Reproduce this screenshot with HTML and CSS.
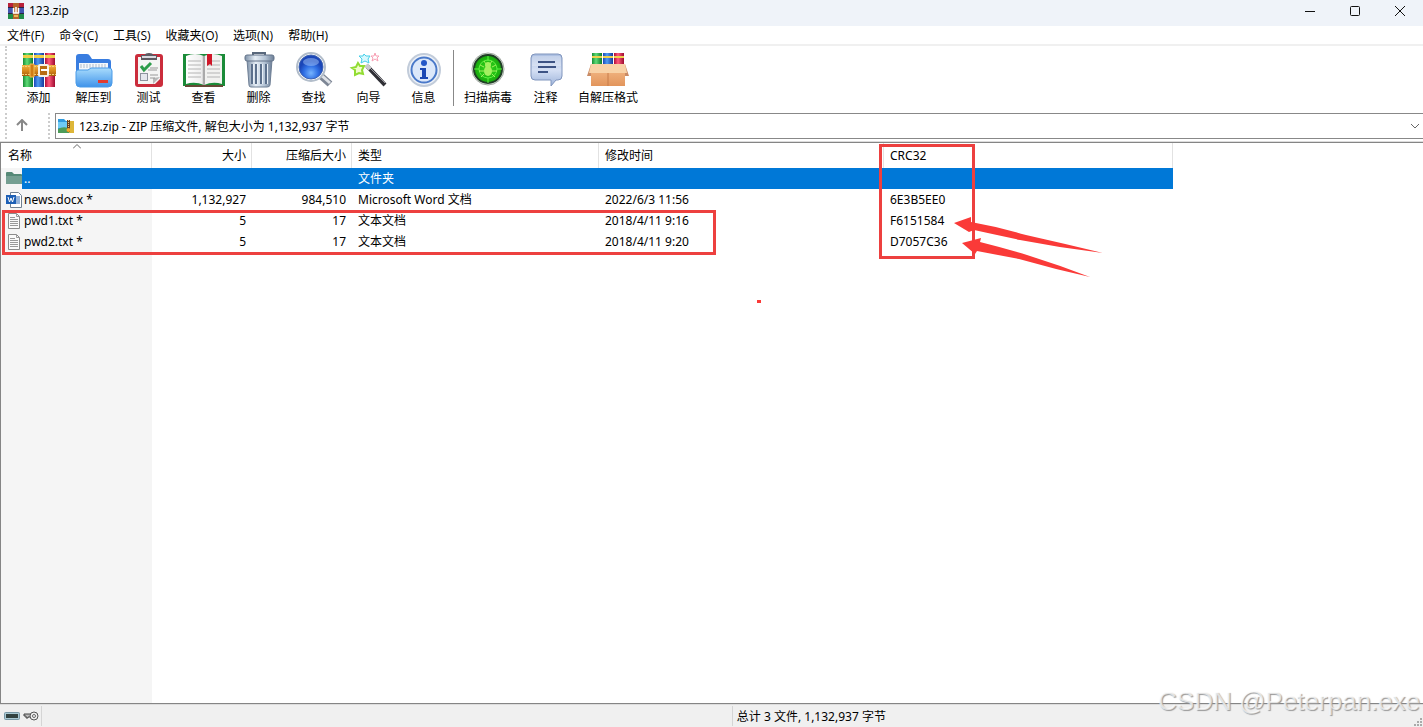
FILE: index.html
```html
<!DOCTYPE html>
<html lang="zh-CN">
<head>
<meta charset="utf-8">
<title>123.zip</title>
<link rel="stylesheet" href="styles.css">
</head>
<body>
<svg width="0" height="0" class="defs" aria-hidden="true">
  <defs>
    <linearGradient id="gGreen"><stop offset="0" stop-color="#168c35"/><stop offset=".4" stop-color="#5fdc77"/><stop offset="1" stop-color="#0d7a2a"/></linearGradient>
    <linearGradient id="gBlue"><stop offset="0" stop-color="#1c46b8"/><stop offset=".4" stop-color="#4f9cf2"/><stop offset="1" stop-color="#16389a"/></linearGradient>
    <linearGradient id="gRed"><stop offset="0" stop-color="#b00d38"/><stop offset=".4" stop-color="#ff5a7c"/><stop offset="1" stop-color="#9c0a30"/></linearGradient>
    <linearGradient id="gBelt" x2="0" y2="1"><stop offset="0" stop-color="#f0b445"/><stop offset=".5" stop-color="#d98b1e"/><stop offset="1" stop-color="#a65c0c"/></linearGradient>
    <linearGradient id="gFolder" x2="0" y2="1"><stop offset="0" stop-color="#a9dcfc"/><stop offset="1" stop-color="#3f93ea"/></linearGradient>
    <linearGradient id="gSteel"><stop offset="0" stop-color="#7f92a9"/><stop offset=".35" stop-color="#e6eef6"/><stop offset=".7" stop-color="#b4c3d4"/><stop offset="1" stop-color="#6c7e96"/></linearGradient>
    <radialGradient id="gLens" cy=".75"><stop offset="0" stop-color="#76b4ff"/><stop offset=".6" stop-color="#2f6fe4"/><stop offset="1" stop-color="#1b46b8"/></radialGradient>
    <linearGradient id="gPage"><stop offset="0" stop-color="#ffffff"/><stop offset=".85" stop-color="#efefef"/><stop offset="1" stop-color="#bdbdbd"/></linearGradient>
    <linearGradient id="gBubble" x2="0" y2="1"><stop offset="0" stop-color="#a9bde0"/><stop offset=".5" stop-color="#d5e0f4"/><stop offset="1" stop-color="#9eb4db"/></linearGradient>
    <linearGradient id="gBox" x2="0" y2="1"><stop offset="0" stop-color="#f5bd8c"/><stop offset="1" stop-color="#e2955c"/></linearGradient>
    <radialGradient id="gVirus"><stop offset="0" stop-color="#35dc1e"/><stop offset="1" stop-color="#17a60c"/></radialGradient>
  </defs>
</svg>
<div class="window">
  <header class="titlebar">
    <svg class="app-icon" viewBox="0 0 16 16"><path fill="#b8203a" d="M0 0h16v5H0z"/><path fill="#4156b0" d="M0 5h16v6H0z"/><path fill="#218c48" d="M0 11h16v5H0z"/><path d="M0 4.500h16M0 10.500h16" stroke="#2c2444"/><path fill="#b5642c" d="M5 0h6v16H5z"/><path d="M5.500 5v5h5V5M8 4v6" fill="none" stroke="#fff" stroke-width="1.500"/><path d="M6 13h4" stroke="#e6bd54" stroke-width="2"/></svg>
    <h1 class="title">123.zip</h1>
    <div class="window-buttons">
      <button class="window-button" aria-label="最小化"><svg viewBox="0 0 12 12"><path d="M1 6.500h10"/></svg></button>
      <button class="window-button" aria-label="最大化"><svg viewBox="0 0 12 12"><rect x="1.500" y="1.500" width="9" height="9" rx="1"/></svg></button>
      <button class="window-button" aria-label="关闭"><svg viewBox="0 0 12 12"><path d="M1 1l10 10M11 1L1 11"/></svg></button>
    </div>
  </header>

  <nav class="menubar">
    <button class="menu-item">文件(F)</button>
    <button class="menu-item">命令(C)</button>
    <button class="menu-item">工具(S)</button>
    <button class="menu-item">收藏夹(O)</button>
    <button class="menu-item">选项(N)</button>
    <button class="menu-item">帮助(H)</button>
  </nav>

  <div class="toolbar">
    <button class="tool"><svg class="tool-icon" viewBox="0 0 44 36">
      <path d="M6 1h10v34H6z" fill="url(#gGreen)"/><path d="M17 1h10v34H17z" fill="url(#gBlue)"/><path d="M28 1h10v34H28z" fill="url(#gRed)"/>
      <path d="M6 3h10v3H6zM17 3h10v3H17zM28 3h10v3H28z" fill="#f0cf45"/>
      <path d="M5 13h34v11H5z" fill="url(#gBelt)"/><path d="M5 14.500h34M5 22.500h34" stroke="#f7cf78" stroke-dasharray="2 1"/>
      <path d="M13 12h4v13h-4z" fill="#cf7c14" stroke="#f3bb55"/><rect x="22" y="13" width="9" height="11" rx="1" fill="#b86c12" stroke="#f6f1e6" stroke-width="2"/><path d="M24 18h8" stroke="#fff" stroke-width="2"/></svg>添加</button>
    <button class="tool"><svg class="tool-icon" viewBox="0 0 44 36">
      <path d="M4 20V5q0-3 3-3h8q2 0 3 2l2 3h16q3 0 3 3v12z" fill="#397de0"/>
      <path d="M7 11h29v12H7z" fill="#f4f8fc"/><path d="M9 12v4M12 12v4M15 12v4M18 12v4M21 12v4M24 12v4M27 12v4M30 12v4M33 12v4" stroke="#b2bdca"/>
      <path d="M4 20q0-2 2-2h10l3-2h18q3 0 3 3v12q0 4-4 4H8q-4 0-4-4z" fill="url(#gFolder)" stroke="#4a9be8"/><rect x="26" y="28" width="10" height="3" fill="#e03c32"/></svg>解压到</button>
    <button class="tool"><svg class="tool-icon" viewBox="0 0 44 36">
      <rect x="8" y="2" width="28" height="33" rx="3" fill="#cb2d3c"/><path d="M11 5h22v22l-5 5H11z" fill="#f5f5f4"/><path d="M33 25l-7 7v-6z" fill="#b9b9b9"/>
      <path d="M14 8V3h4q0-2 4-2t4 2h4v5z" fill="#5d5a62"/><path d="M15 5h14" stroke="#d9d9df" stroke-width="2"/>
      <path d="M14 14l3 4 7-7" fill="none" stroke="#2d9c4a" stroke-width="3"/><rect x="13.500" y="21.500" width="7" height="7" fill="#e5e7ed" stroke="#8e939e"/><path d="M23 16h8M21 18h9M23 23h8M23 26h5" stroke="#999"/></svg>测试</button>
    <button class="tool"><svg class="tool-icon" viewBox="0 0 44 36">
      <path d="M1 2h42v32H1z" fill="#1a8b38"/><path d="M3 33h38v2H3z" fill="#664836"/>
      <path d="M4 4q9-4 18 0v29q-9-4-18-1z" fill="url(#gPage)"/><path d="M40 4q-9-4-18 0v29q9-4 18-1z" fill="#f2f2f0"/><path d="M22 4v29" stroke="#aaa" stroke-width="2"/>
      <path d="M6 9h13M6 13h13M6 17h13M6 21h13M6 25h13M25 9h13M25 13h13M25 17h13M25 21h13M25 25h13" stroke="#b4b4b4"/><path d="M25 2h5v12l-2-2-3 2z" fill="#cf1728"/></svg>查看</button>
    <button class="tool"><svg class="tool-icon" viewBox="0 0 44 36">
      <path d="M16 3V1h12v2" fill="none" stroke="#59687c" stroke-width="2"/><path d="M10 8h25l-2 25q-.2 2-3 2H14q-2 0-2-2z" fill="url(#gSteel)" stroke="#6d7e94"/>
      <path d="M15 12v20M19 12v20M24 12v20M29 12v20" stroke="#5c708c" stroke-width="2"/><path d="M16.500 12v20M20.500 12v20M25.500 12v20M30.500 12v20" stroke="#e8eff7"/><rect x="8" y="3" width="29" height="6" rx="2" fill="url(#gSteel)" stroke="#627389"/></svg>删除</button>
    <button class="tool"><svg class="tool-icon" viewBox="0 0 44 36">
      <path d="M29 24l9 8" stroke="#7d8695" stroke-width="7"/><path d="M29 23l9 8" stroke="#dfe2e7" stroke-width="3"/><circle cx="19" cy="15" r="14" fill="#fff" stroke="#b2bdca" stroke-width="2"/><circle cx="19" cy="15" r="12" fill="url(#gLens)" stroke="#3e63b2"/><ellipse cx="19" cy="10" rx="8" ry="4" fill="#a6c7fb" opacity=".5"/></svg>查找</button>
    <button class="tool"><svg class="tool-icon" viewBox="0 0 44 36">
      <path d="M20 14l18 19" stroke="#303036" stroke-width="4"/><path d="M20 13l18 18" stroke="#9999a0"/><path d="M19 13l4 4" stroke="#c9c9cd" stroke-width="4"/>
      <path d="M11 11l2 3 4 0-2 4 1 4-4-1-4 2 0-5-3-2 4-1z" fill="#f0fdc9" stroke="#91dc32" stroke-width="2"/><path d="M17 2l2 2h4l-2 3 1 4-4-2-4 2 1-4-3-3h4z" fill="#d8f8fd" stroke="#45cfe9"/><path d="M28 1l1 3h3l-2 2 1 3-3-2-3 2 1-3-2-2h3z" fill="#fff" stroke="#f7a0b4"/></svg>向导</button>
    <button class="tool"><svg class="tool-icon" viewBox="0 0 44 36">
      <circle cx="22" cy="18" r="16" fill="#eef2f8" stroke="#c2ccda" stroke-width="2"/><circle cx="22" cy="18" r="12.500" fill="#dce8fa" stroke="#4a79c9" stroke-width="2"/><circle cx="22" cy="11" r="3" fill="#2457c7"/><path d="M18 16h6v9h2v2h-8v-2h2v-7h-2z" fill="#1c48b4"/></svg>信息</button>
    <span class="tool-separator"></span>
    <button class="tool tool-wide"><svg class="tool-icon" viewBox="0 0 44 36">
      <circle cx="22" cy="17" r="16" fill="#e9ece9" stroke="#a0a8a0"/><circle cx="22" cy="17" r="14" fill="url(#gVirus)" stroke="#1f3d25" stroke-width="2"/><circle cx="22" cy="17" r="9" fill="none" stroke="#5cf441"/><path d="M22 4v5M22 26v5M8 17h5M31 17h5" stroke="#5cf441"/>
      <path d="M18 9l2 3M26 9l-2 3M14 13l4 2M30 13l-4 2M13 19h5M31 19h-5M15 25l3-3M29 25l-3-3" stroke="#a6ee60"/><ellipse cx="22" cy="19" rx="4" ry="5" fill="#a4f060"/><circle cx="22" cy="13" r="3" fill="#a4f060"/></svg>扫描病毒</button>
    <button class="tool"><svg class="tool-icon" viewBox="0 0 44 36">
      <path d="M11 2h23q4 0 4 4v18q0 4-4 4h-2l-5 6v-6H11q-4 0-4-4V6q0-4 4-4z" fill="url(#gBubble)" stroke="#8095bd"/><path d="M10 4h25q2 0 2 3v7H8V7q0-3 2-3z" fill="#fff" opacity=".25"/><path d="M14 10h17M14 15h18M14 20h10" stroke="#3d5384" stroke-width="2"/></svg>注释</button>
    <button class="tool tool-wide tool-last"><svg class="tool-icon" viewBox="0 0 44 36">
      <path d="M6 1h10v14H6z" fill="url(#gGreen)"/><path d="M17 1h10v14H17z" fill="url(#gBlue)"/><path d="M28 1h10v14H28z" fill="url(#gRed)"/><path d="M6 4h10v2H6zM17 4h10v2H17zM28 4h10v2H28z" fill="#efd14d"/>
      <path d="M5 12L1 24h5zM39 12l4 12h-5z" fill="#c98b66"/><path d="M5 13h34v21H5z" fill="url(#gBox)"/><path d="M5 12h34l2 9H3z" fill="#f8d2a7"/><path d="M22 21v13" stroke="#c77d4b"/></svg>自解压格式</button>
  </div>

  <div class="addressbar">
    <button class="up-button" aria-label="上一级"><svg viewBox="0 0 12 12"><path d="M6 12V1M1 6l5-5 5 5"/></svg></button>
    <div class="path-box">
      <svg class="path-icon" viewBox="0 0 16 16"><path d="M0 1h6l2 2h8v12H0z" fill="#319bdd"/><path d="M0 4h10v6H0z" fill="#6ecbf5"/><path d="M0 11q6-4 16 1v3H0z" fill="#4d9c59"/><path d="M11 3h5v12h-5z" fill="#ddb638"/><path d="M9 2h3v12H9z" fill="#69421e"/><path d="M10.500 2v8" stroke="#e8c889" stroke-dasharray="1 1"/><circle cx="10.500" cy="12" r="2" fill="#f4ab28"/></svg>
      <input class="path-input" aria-label="路径" value="123.zip - ZIP 压缩文件, 解包大小为 1,132,937 字节">
      <button class="path-drop" aria-label="展开"><svg viewBox="0 0 8 6"><path d="M0 1l4 4 4-4"/></svg></button>
    </div>
  </div>

  <main class="file-list">
    <table class="files">
      <colgroup><col class="col-name"><col class="col-size"><col class="col-size"><col class="col-type"><col class="col-date"><col class="col-crc"></colgroup>
      <thead><tr><th>名称<svg class="sort-mark" viewBox="0 0 8 5"><path d="M0 4.500L4 .5l4 4"/></svg></th><th class="num">大小</th><th class="num">压缩后大小</th><th>类型</th><th>修改时间</th><th>CRC32</th></tr></thead>
      <tbody>
        <tr class="selected"><td><span class="file-name"><svg class="file-icon" viewBox="0 0 16 16"><path d="M0 2q0-1 1-1h5l2 2h7q1 0 1 1v8q0 1-1 1H1q-1 0-1-1z" fill="#568977"/><path d="M0 5h16v7q0 1-1 1H1q-1 0-1-1z" fill="#759f92"/></svg><span class="name-text">..</span></span></td><td></td><td></td><td>文件夹</td><td></td><td></td></tr>
        <tr><td><span class="file-name"><svg class="file-icon" viewBox="0 0 16 16"><path d="M4.500.5h8l3 3v12h-11z" fill="#fff" stroke="#708091"/><path d="M10 5h4M10 7h4M10 9h4M10 11h4" stroke="#2c68b5"/><path d="M0 3h10v9H0z" fill="#1d5fb5"/><path d="M2 5l1.500 5L5 6l1.500 4L8 5" fill="none" stroke="#fff"/></svg><span class="name-text">news.docx *</span></span></td><td class="num">1,132,927</td><td class="num">984,510</td><td>Microsoft Word 文档</td><td>2022/6/3 11:56</td><td>6E3B5EE0</td></tr>
        <tr><td><span class="file-name"><svg class="file-icon" viewBox="0 0 16 16"><path d="M2.500.5h8l3 3v12h-11z" fill="#fafafa" stroke="#8b8b8b"/><path d="M10.500.5v3h3M4 4.500h5M4 6.500h8M4 8.500h8M4 10.500h8M4 12.500h8" fill="none" stroke="#999"/></svg><span class="name-text">pwd1.txt *</span></span></td><td class="num">5</td><td class="num">17</td><td>文本文档</td><td>2018/4/11 9:16</td><td>F6151584</td></tr>
        <tr><td><span class="file-name"><svg class="file-icon" viewBox="0 0 16 16"><path d="M2.500.5h8l3 3v12h-11z" fill="#fafafa" stroke="#8b8b8b"/><path d="M10.500.5v3h3M4 4.500h5M4 6.500h8M4 8.500h8M4 10.500h8M4 12.500h8" fill="none" stroke="#999"/></svg><span class="name-text">pwd2.txt *</span></span></td><td class="num">5</td><td class="num">17</td><td>文本文档</td><td>2018/4/11 9:20</td><td>D7057C36</td></tr>
      </tbody>
    </table>
    <svg class="marks" width="1110" height="180" viewBox="0 0 1110 180" aria-hidden="true">
      <rect class="frame" x="2.500" y="68.500" width="711" height="42"/>
      <rect class="frame" x="879.500" y="2.500" width="93" height="112"/>
      <path d="M953 80l17-6v5q28 5 55 13 40 9 77 18-42-5-83-13-23-5-46-10l-5 2z"/>
      <path d="M961 100l19-5-1 4q24 6 47 13 32 10 63 22-36-8-71-18-21-4-42-8l-2 3z"/>
      <rect x="756" y="157" width="4" height="3"/>
    </svg>
  </main>

  <footer class="statusbar">
    <div class="status-left">
      <div class="status-icons">
        <svg class="disk-icon" viewBox="0 0 16 8"><rect x=".5" y=".5" width="15" height="7" rx="1" fill="#a9c9d3" stroke="#7897a5"/><rect x="2" y="2" width="12" height="4" fill="#324240"/></svg>
        <svg class="key-icon" viewBox="0 0 16 10"><path d="M11 3H1v2h2v2h2V6h6" fill="#bbb" stroke="#444"/><circle cx="11" cy="5" r="4" fill="#eee" stroke="#555"/><circle cx="11" cy="5" r="1.500" fill="#fff" stroke="#666"/></svg>
      </div>
    </div>
    <div class="status-total">总计 3 文件, 1,132,937 字节</div>
    <svg class="grip" viewBox="0 0 9 9"><path d="M6 0h2v2H6zM3 3h2v2H3zM6 3h2v2H6zM0 6h2v2H0zM3 6h2v2H3zM6 6h2v2H6z" fill="#aaa"/></svg>
  </footer>
  <div class="watermark">CSDN @Peterpan.exe</div>
</div>
</body>
</html>
```
FILE: styles.css
```css
* { box-sizing: border-box; }
body { margin: 0; background: #fff; color: #000; font: 12px/16px "Noto Sans", "Noto Sans CJK SC", sans-serif; }
button, input { margin: 0; padding: 0; border: 0; background: none; color: inherit; font: inherit; }
.defs { position: absolute; }
.window { position: relative; display: flex; flex-direction: column; min-height: 100vh; overflow: hidden; }

.titlebar { display: flex; align-items: center; height: 26px; padding: 0 1px 5px 8px; gap: 5px; background: #eff3f9; }
.app-icon { width: 16px; height: 16px; }
.title { flex: 1; margin: 0; font-size: 12px; font-weight: 400; }
.window-buttons { display: flex; }
.window-button { display: flex; justify-content: center; align-items: center; width: 45px; height: 20px; }
.window-button svg { width: 12px; height: 12px; fill: none; stroke: #111; }

.menubar { display: flex; gap: 15px; height: 20px; padding: 2px 0 0 7px; border-bottom: 2px solid #f0f0f0; font-family: "Open Sans", "Noto Sans CJK SC", sans-serif; }
.menu-item { white-space: nowrap; }

.toolbar { display: flex; height: 64px; margin-left: 5px; padding: 6px 0 0 4px; border-left: 2px dotted #ccc; }
.tool { display: flex; flex-direction: column; align-items: center; width: 55px; height: 54px; gap: 2px; white-space: nowrap; }
.tool-icon { width: 44px; height: 36px; }
.tool-separator { width: 1px; height: 56px; margin: -2px 4px 0 2px; background: #888; }
.tool-wide { width: 60px; }
.tool-last { width: 70px; }

.addressbar { display: flex; height: 32px; padding: 3px 0 2px; border-bottom: 1px solid #ddd; }
.up-button { width: 45px; margin-left: 5px; border: dotted #ccc; border-width: 0 2px; }
.up-button svg { display: block; width: 12px; height: 12px; margin: 0 0 3px 9px; fill: none; stroke: #888; stroke-width: 2; }
.path-box { display: flex; align-items: center; flex: 1; gap: 5px; margin-left: 5px; padding: 0 4px 0 2px; border: 1px solid #888; border-right: 0; }
.path-icon { width: 16px; height: 16px; }
.path-input { flex: 1; min-width: 0; padding-top: 2px; outline: 0; }
.path-drop { width: 8px; height: 6px; display: flex; }
.path-drop svg { width: 8px; height: 6px; fill: none; stroke: #666; }

.file-list { position: relative; flex: 1; border: 1px solid #858585; border-right: 0; background: linear-gradient(#f5f5f5, #f5f5f5) 0 0 / 151px 100% no-repeat; }
.files { width: 1172px; table-layout: fixed; border-collapse: separate; border-spacing: 0; }
.col-name { width: 151px; }
.col-size { width: 100px; }
.col-type { width: 247px; }
.col-date { width: 285px; }
.col-crc { width: 289px; }
.files th { position: relative; height: 25px; padding: 0 5px 0 6px; border-right: 1px solid #e2e2e2; background: #fff; font-weight: 400; text-align: left; }
.files td { height: 21px; padding: 0 6px; white-space: nowrap; }
.files th:first-child { padding-left: 7px; }
.files td:first-child { padding: 0 0 0 5px; }
.files .num { text-align: right; }
.selected td { background: #0078d7; color: #fff; }
.files .selected td:first-child { background: linear-gradient(90deg, #f5f5f5 21px, #0078d7 21px); }
.file-name { display: flex; align-items: center; gap: 2px; }
.file-icon { width: 16px; height: 16px; }
.sort-mark { position: absolute; top: 1px; left: 72px; width: 8px; height: 5px; fill: none; stroke: #666; }
.marks { position: absolute; top: 0; left: 0; fill: #fa3a38; pointer-events: none; }
.frame { fill: none; stroke: #ed403f; stroke-width: 3; }

.statusbar { display: flex; align-items: center; height: 23px; border-top: 1px solid #ddd; background: #f0f0f0; }
.status-left { width: 51.5%; border-right: 1px solid #d5d5d5; }
.status-icons { display: flex; align-items: center; gap: 3px; width: 42px; height: 20px; padding-left: 4px; border-right: 1px solid #d5d5d5; }
.disk-icon { width: 16px; height: 8px; }
.key-icon { width: 16px; height: 10px; }
.status-total { flex: 1; padding: 2px 0 0 4px; }
.grip { align-self: flex-end; width: 9px; height: 9px; }
.watermark { position: absolute; right: 3px; bottom: 11px; color: #ffffffb0; font: 26px/30px "Liberation Sans", sans-serif; text-shadow: 1px 1px 1px #999; }
```
